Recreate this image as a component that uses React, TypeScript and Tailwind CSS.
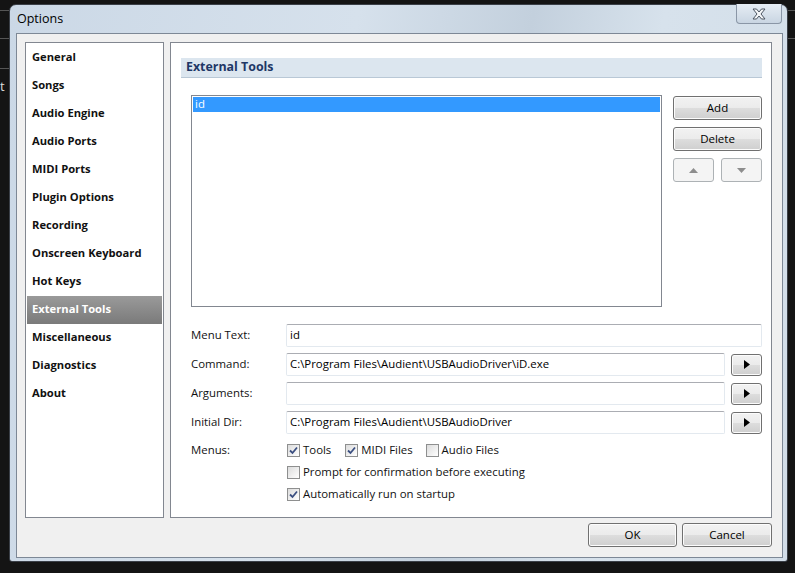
import React from "react";

const font = { fontFamily: '"Open Sans", "Noto Sans", "Liberation Sans", sans-serif' };

const navItems = [
  "General",
  "Songs",
  "Audio Engine",
  "Audio Ports",
  "MIDI Ports",
  "Plugin Options",
  "Recording",
  "Onscreen Keyboard",
  "Hot Keys",
  "External Tools",
  "Miscellaneous",
  "Diagnostics",
  "About",
];

function Check({ checked }: { checked: boolean }) {
  return (
    <span className="w-[13px] h-[13px] border border-[#8e8f8f] bg-gradient-to-br from-[#dcdcdc] to-[#ffffff] flex items-center justify-center shrink-0">
      {checked && (
        <svg width="9" height="9" viewBox="0 0 9 9">
          <path d="M1 4.5 L3.5 7 L8 1.5" fill="none" stroke="#3b4f81" strokeWidth="1.8" />
        </svg>
      )}
    </span>
  );
}

function WinButton({ children, className = "" }: { children: React.ReactNode; className?: string }) {
  return (
    <div
      className={
        "border border-[#707070] rounded-[3px] bg-[linear-gradient(#f2f2f2_0%,#ebebeb_50%,#dddddd_51%,#cfcfcf_100%)] flex items-center justify-center text-[11.5px] text-black shadow-[inset_0_0_0_1px_#fcfcfc] " +
        className
      }
    >
      {children}
    </div>
  );
}

function ArrowBtn() {
  return (
    <WinButton className="w-[31px] h-[22px]">
      <svg width="6" height="9" viewBox="0 0 6 9">
        <path d="M0 0 L6 4.5 L0 9 Z" fill="#000" />
      </svg>
    </WinButton>
  );
}

function Field({ value }: { value: string }) {
  return (
    <div className="flex-1 h-[23px] border border-[#e3e9ef] border-t-[#abadb3] rounded-[2px] bg-white flex items-center px-[3px] pb-[1px] text-[11.4px] text-black">
      {value}
    </div>
  );
}

export default function App() {
  return (
    <div className="w-[795px] h-[573px] bg-[#141414] relative overflow-hidden" style={font}>
      {/* background desktop remnants */}
      <div className="absolute left-0 top-[10px] w-[9px] h-px bg-[#555]" />
      <div className="absolute left-0 top-[38px] w-[9px] h-px bg-[#555]" />
      <div className="absolute left-0 top-[68px] w-[9px] h-px bg-[#555]" />
      <div className="absolute left-0 top-[80px] text-[13px] text-[#ddd] leading-none">t</div>
      <div className="absolute right-0 top-[10px] w-[7px] h-px bg-[#555]" />
      <div className="absolute right-0 top-[38px] w-[7px] h-px bg-[#555]" />

      <div className="pt-[4px] pl-[9px]">
        <div className="w-[779px] h-[558px] rounded-t-[7px] rounded-b-[3px] border border-[#3a3f47] bg-[linear-gradient(100deg,#cbd8e6_0%,#d6e1ec_40%,#c3d0dd_60%,#d7e2ec_75%,#d2dde8_100%)] flex flex-col relative">
          {/* title bar */}
          <div className="h-[28px] flex items-center pl-[7px] text-[12.5px] text-black">Options</div>
          <div className="absolute right-[5px] top-[-1px] w-[46px] h-[20px] rounded-b-[4px] border border-[#8a96a6] border-t-0 bg-[linear-gradient(#e6edf4,#c9d5e2)] flex items-center justify-center">
            <svg width="16" height="12" viewBox="0 0 16 12">
              <path
                d="M2 1 L5.5 1 L8 4 L10.5 1 L14 1 L10 6 L14 11 L10.5 11 L8 8 L5.5 11 L2 11 L6 6 Z"
                fill="#f4f6f8"
                stroke="#4c5561"
                strokeWidth="1"
                strokeLinejoin="round"
              />
            </svg>
          </div>

          {/* client area */}
          <div className="ml-[6px] mr-[4px] h-[525px] border border-[#7d8896] bg-[#f0f0f0] flex flex-col pl-[8px] pr-[10px] pt-[8px]">
            <div className="flex gap-[6px] h-[476px]">
              {/* nav */}
              <div className="w-[140px] border border-[#828790] bg-white p-[1px] pt-[1px]">
                {navItems.map((n) => {
                  const sel = n === "External Tools";
                  return (
                    <div
                      key={n}
                      className={
                        "h-[28px] flex items-center pl-[5px] pb-[1px] text-[11.2px] font-bold " +
                        (sel
                          ? "bg-[linear-gradient(#9a9a9a,#7a7a7a)] text-white"
                          : "text-[#111]")
                      }
                    >
                      {n}
                    </div>
                  );
                })}
              </div>

              {/* right panel */}
              <div className="w-[603px] border border-[#828790] bg-white flex flex-col pt-[15px] pl-[10px] pr-[9px]">
                <div className="h-[20px] bg-[#dce6ef] border-b border-[#b9c8d6] flex items-center pl-[5px] pb-[1px] text-[12.4px] font-bold text-[#1e3766]">
                  External Tools
                </div>

                <div className="flex mt-[17px] pl-[10px] gap-[11px]">
                  <div className="w-[471px] h-[212px] border border-[#828790] bg-white p-[1px]">
                    <div className="h-[15px] bg-[#3399ff] text-white text-[11.4px] leading-[14px] pl-[2px]">id</div>
                  </div>
                  <div className="flex flex-col gap-[7px] pt-[1px]">
                    <WinButton className="w-[89px] h-[24px]">Add</WinButton>
                    <WinButton className="w-[89px] h-[24px]">Delete</WinButton>
                    <div className="flex gap-[7px]">
                      <div className="w-[41px] h-[24px] border border-[#adb2b5] rounded-[3px] bg-[#f4f4f4] flex items-center justify-center">
                        <svg width="9" height="5" viewBox="0 0 9 5">
                          <path d="M0 5 L4.5 0 L9 5 Z" fill="#8d8d8d" />
                        </svg>
                      </div>
                      <div className="w-[41px] h-[24px] border border-[#adb2b5] rounded-[3px] bg-[#f4f4f4] flex items-center justify-center">
                        <svg width="9" height="5" viewBox="0 0 9 5">
                          <path d="M0 0 L4.5 5 L9 0 Z" fill="#8d8d8d" />
                        </svg>
                      </div>
                    </div>
                  </div>
                </div>

                {/* form */}
                <div className="flex flex-col gap-[6px] mt-[17px] pl-[10px] text-[11.4px] text-[#111]">
                  <div className="flex items-center">
                    <div className="w-[95px] pb-[1px]">Menu Text:</div>
                    <Field value="id" />
                  </div>
                  <div className="flex items-center gap-[6px]">
                    <div className="w-[89px] pb-[1px]">Command:</div>
                    <Field value="C:\Program Files\Audient\USBAudioDriver\iD.exe" />
                    <ArrowBtn />
                  </div>
                  <div className="flex items-center gap-[6px]">
                    <div className="w-[89px] pb-[1px]">Arguments:</div>
                    <Field value="" />
                    <ArrowBtn />
                  </div>
                  <div className="flex items-center gap-[6px]">
                    <div className="w-[89px] pb-[1px]">Initial Dir:</div>
                    <Field value="C:\Program Files\Audient\USBAudioDriver" />
                    <ArrowBtn />
                  </div>
                </div>

                <div className="flex mt-[8px] pl-[10px] text-[11.4px] text-[#111]">
                  <div className="w-[96px] leading-[15px]">Menus:</div>
                  <div className="flex flex-col gap-[6px]">
                    <div className="flex items-center h-[16px]">
                      <Check checked />
                      <span className="ml-[3px] mr-[14px]">Tools</span>
                      <Check checked />
                      <span className="ml-[3px] mr-[13px]">MIDI Files</span>
                      <Check checked={false} />
                      <span className="ml-[3px]">Audio Files</span>
                    </div>
                    <div className="flex items-center h-[16px]">
                      <Check checked={false} />
                      <span className="ml-[3px]">Prompt for confirmation before executing</span>
                    </div>
                    <div className="flex items-center h-[16px]">
                      <Check checked />
                      <span className="ml-[3px]">Automatically run on startup</span>
                    </div>
                  </div>
                </div>
              </div>
            </div>

            {/* footer buttons */}
            <div className="flex justify-end gap-[5px] mt-[5px]">
              <WinButton className="w-[89px] h-[24px]">OK</WinButton>
              <WinButton className="w-[90px] h-[24px]">Cancel</WinButton>
            </div>
          </div>
        </div>
      </div>
    </div>
  );
}
